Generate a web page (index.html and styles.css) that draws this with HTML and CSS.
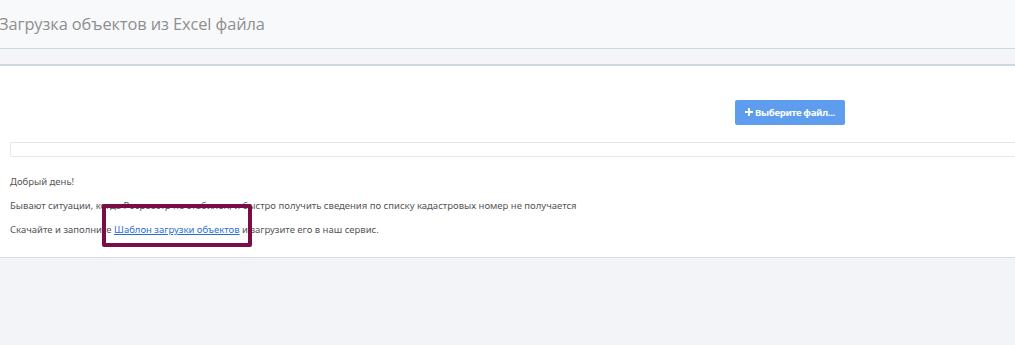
FILE: index.html
```html
<!DOCTYPE html>
<html lang="ru">
<head>
<meta charset="utf-8">
<link rel="stylesheet" href="styles.css">
</head>
<body>
<header class="page-header">
  <h1 class="title">Загрузка объектов из Excel файла</h1>
</header>
<div class="strip"></div>
<main class="panel">
  <div class="upload-row">
    <button class="btn-file"><svg class="plus" viewBox="0 0 8 8" width="8" height="8"><path d="M3 0h2v3h3v2H5v3H3V5H0V3h3z" fill="#fff"/></svg>Выберите файл...</button>
  </div>
  <div class="progress"></div>
  <div class="text">
    <p>Добрый день!</p>
    <p>Бывают ситуации, когда Росреестр не стабилен, и быстро получить сведения по списку кадастровых номер не получается</p>
    <p>Скачайте и заполните <a href="#">Шаблон загрузки объектов</a> и загрузите его в наш сервис.</p>
    <div class="highlight"></div>
  </div>
</main>
</body>
</html>
```
FILE: styles.css
```css
html, body {
  margin: 0;
  padding: 0;
  background: #f3f4f8;
  font-family: "Noto Sans", "Open Sans", sans-serif;
}
.page-header {
  height: 48px;
  background: #f8f9fb;
  border-bottom: 1px solid #c9d8e3;
  display: flex;
  align-items: center;
}
.title {
  margin: 0 0 1px -1px;
  font-family: "Open Sans", sans-serif;
  font-weight: 400;
  font-size: 16.4px;
  color: #8f8f8f;
  letter-spacing: -0.1px;
}
.strip {
  height: 15px;
  background: #f4f5f9;
  border-bottom: 2px solid #cbd8e2;
}
.panel {
  background: #fff;
  border-bottom: 1px solid #d6dde5;
  padding: 34px 0 10px 10px;
}
.upload-row {
  display: flex;
  padding-left: 725px;
}
.btn-file {
  width: 110px;
  height: 25px;
  border: none;
  border-radius: 2px;
  background: #5e9ced;
  color: #fff;
  font-family: "Noto Sans", sans-serif;
  font-weight: 700;
  font-size: 9.5px;
  letter-spacing: -0.3px;
  display: flex;
  align-items: center;
  justify-content: center;
  gap: 2px;
  padding: 0;
}
.plus { margin-top: -1px; }
.progress {
  margin-top: 17px;
  height: 13px;
  border: 1px solid #e8e8e8;
  border-right: none;
  border-radius: 2px 0 0 2px;
}
.text {
  position: relative;
  padding-top: 18px;
  font-size: 9.5px;
  color: #555;
}
.text p {
  margin: 0 0 10px;
  line-height: 14px;
}
.text a {
  color: #2a6fd6;
  text-decoration: underline;
}
.highlight {
  position: absolute;
  left: 92px;
  top: 47px;
  width: 142px;
  height: 35px;
  border: 4px solid #7a0c46;
  border-radius: 2px;
}
```
